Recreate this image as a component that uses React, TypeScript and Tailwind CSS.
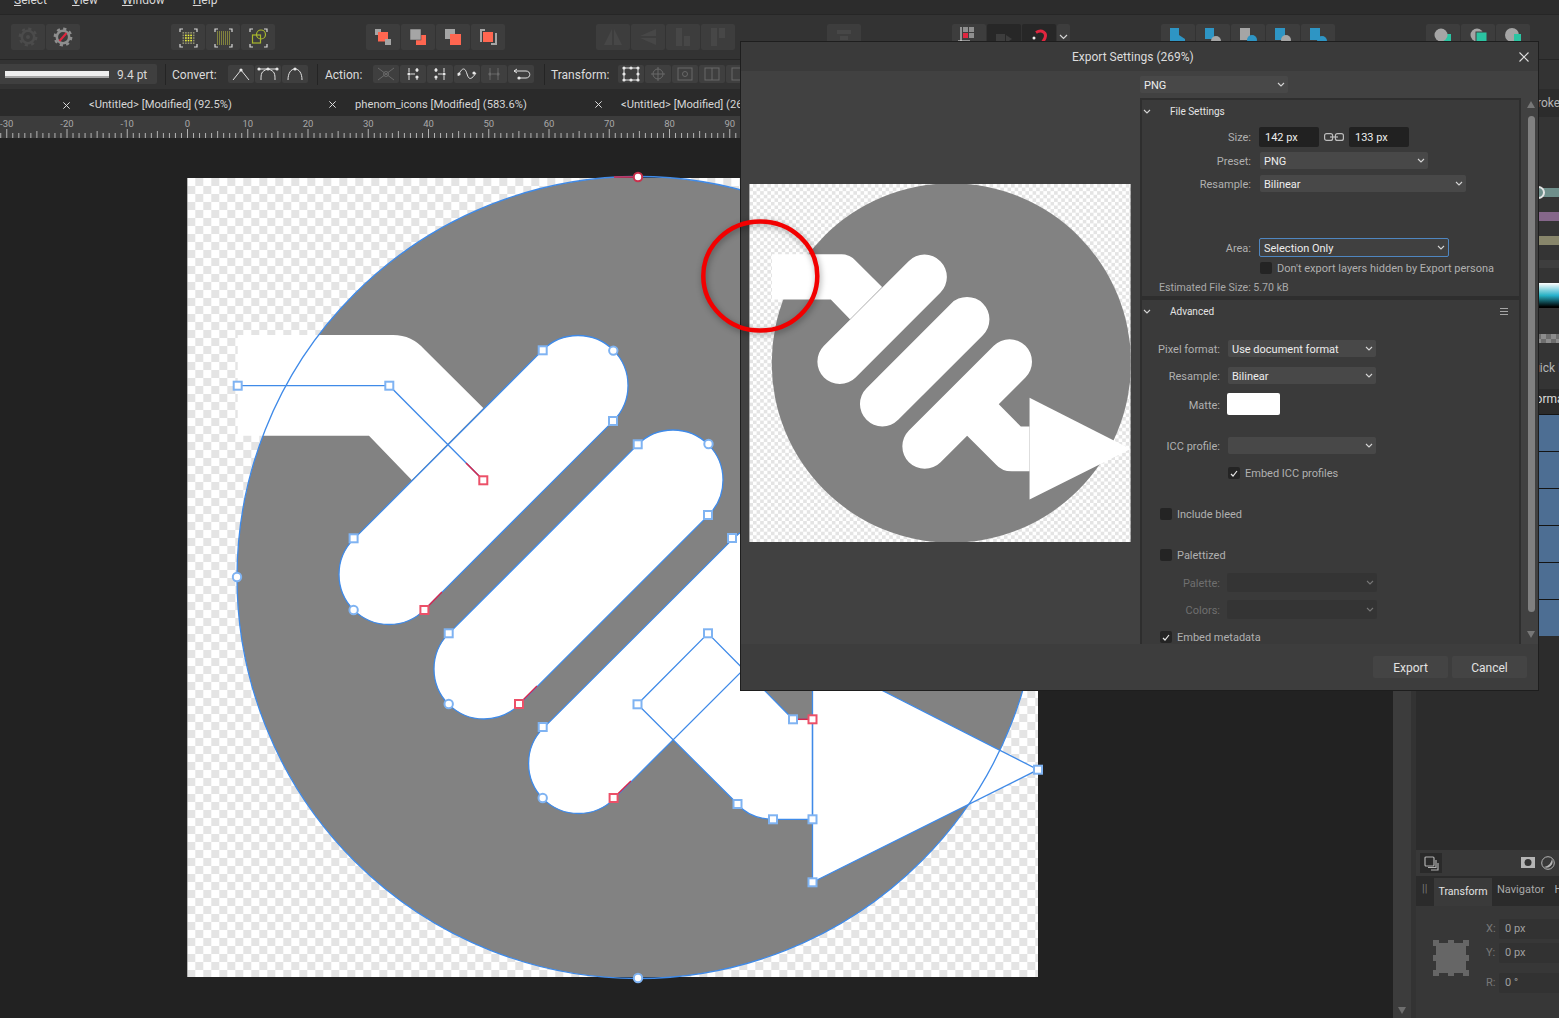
import type { ReactNode } from "react";

const capsule = (ax: number, ay: number, bx: number, by: number) => {
  const d = 35.36;
  return `M${ax - d} ${ay - d}A50 50 0 0 1 ${ax + d} ${ay + d}L${bx + d} ${by + d}A50 50 0 0 1 ${bx - d} ${by - d}Z`;
};

const CAPSULES = [capsule(578, 385.5, 389, 574.5), capsule(673, 480, 484, 669), capsule(768, 574.5, 578.6, 763.5)];
const STEM_IN = "M237.7 335H393Q412 335 425 350L483.3 408L411.7 480L369 435.7H237.7Z";
const STEM_OUT = "M637.5 704.3L708 633.3L793 719.3H812.5V819.3H773Q750 819 737.5 804Z";
const ARROW = "M812.5 655L1038 769.7L812.5 882.3Z";

// the icon itself, in artboard coordinates; shared by canvas and export preview
function Artwork({ id }: { id: string }) {
  return (
    <>
      <defs>
        <pattern id={id} x="187.3" y="178" width="16" height="16" patternUnits="userSpaceOnUse">
          <rect width="16" height="16" fill="#ffffff" />
          <rect x="8" width="8" height="8" fill="#e4e4e4" />
          <rect y="8" width="8" height="8" fill="#e4e4e4" />
        </pattern>
        <clipPath id={`${id}-clip`}>
          <rect x="187.3" y="178" width="850.7" height="799" />
        </clipPath>
      </defs>
      <rect x="187.3" y="178" width="850.7" height="799" fill={`url(#${id})`} />
      <g clipPath={`url(#${id}-clip)`} fill="#ffffff">
        <circle cx="638" cy="577.5" r="401" fill="#828282" />
        <path d={STEM_IN} />
        {CAPSULES.map((d) => (
          <path key={d} d={d} />
        ))}
        <path d={STEM_OUT} />
        <path d={ARROW} />
      </g>
    </>
  );
}

const SQUARES = [
  [237.7, 385.7], [389.3, 385.7], [542.7, 350.3], [613, 421], [353.6, 538.3], [637.7, 444.3], [708, 515],
  [448.7, 633.3], [732, 538], [542.7, 727], [637.5, 704.3], [708, 633.3], [737.5, 804], [773, 819.3],
  [812.5, 819.3], [812.5, 882.3], [1038, 769.7], [793, 719.3],
];
const CIRCLES = [[237, 577], [638, 978], [613.3, 350.6], [353.6, 610], [708.5, 444], [448.7, 704], [542.7, 798]];
const RED_SQUARES = [[483.3, 480.3], [424.4, 610], [519, 704], [613.6, 798], [812.5, 719.3]];
const RED_HANDLES = [
  "M483.3 480.3L466 463", "M424.4 610L442 592", "M519 704L537 686", "M613.6 798L631 781",
  "M638 177H614", "M812.5 719.3H793",
];

function CanvasDrawing() {
  return (
    <svg width="1393" height="880" viewBox="0 138 1393 880" className="block">
      <Artwork id="board" />
      <g fill="none" stroke="#3f8ae8" strokeWidth="1.3">
        <circle cx="638" cy="577.5" r="401" />
        {CAPSULES.map((d) => (
          <path key={d} d={d} />
        ))}
        <path d="M237.7 385.7H389.3L483.3 480.3" />
        <path d={STEM_OUT} />
        <path d={ARROW} />
      </g>
      <g fill="none" stroke="#d8274a" strokeWidth="1.5">
        {RED_HANDLES.map((d) => (
          <path key={d} d={d} />
        ))}
      </g>
      <g fill="#ffffff" stroke="#7fb3f2" strokeWidth="2">
        {SQUARES.map(([x, y]) => (
          <rect key={`${x}-${y}`} x={x - 4} y={y - 4} width="8" height="8" />
        ))}
        {CIRCLES.map(([x, y]) => (
          <circle key={`${x}-${y}`} cx={x} cy={y} r="4.2" />
        ))}
      </g>
      <g fill="#ffffff" stroke="#ec5068" strokeWidth="2">
        {RED_SQUARES.map(([x, y]) => (
          <rect key={`${x}-${y}`} x={x - 4} y={y - 4} width="8" height="8" />
        ))}
        <circle cx="638" cy="177" r="4.2" stroke="#c9304c" />
      </g>
    </svg>
  );
}

function Gear({ dim }: { dim?: boolean }) {
  const c = dim ? "#4b4b4b" : "#8e8e8e";
  return (
    <svg width="34" height="26" viewBox="0 0 34 26">
      <circle cx="17" cy="13" r="6.2" fill="none" stroke={c} strokeWidth="2.6" />
      <circle cx="17" cy="13" r="8.2" fill="none" stroke={c} strokeWidth="2.4" strokeDasharray="3.2 3.23" />
      {dim ? <circle cx="17" cy="13" r="2" fill={c} /> : <path d="M13.5 17L20.5 9" stroke="#e0263f" strokeWidth="2" />}
    </svg>
  );
}

function Brackets() {
  return (
    <path
      d="M9 8V5H12M23 5H26V8M9 20V23H12M23 23H26V20"
      fill="none"
      stroke="#d8d8d8"
      strokeWidth="1.2"
    />
  );
}

function DotGrid({ n, gap, bright }: { n: number; gap: number; bright: boolean }) {
  const dots = [];
  const start = 17.5 - ((n - 1) * gap) / 2;
  const size = bright ? 1.6 : 1;
  for (let r = 0; r < n; r++) {
    for (let c = 0; c < n; c++) {
      const inner = bright && r > 0 && r < n - 1 && c > 0 && c < n - 1;
      dots.push(
        <rect
          key={`${r}-${c}`}
          x={start + c * gap - size / 2}
          y={14 + (r - (n - 1) / 2) * gap - size / 2}
          width={size}
          height={size}
          fill={inner ? "#f2f53c" : bright ? "#8f8f70" : "#c4c740"}
        />,
      );
    }
  }
  return (
    <svg width="34" height="26" viewBox="0 0 34 26">
      <Brackets />
      {dots}
    </svg>
  );
}

const G = "#a5a5a5";
const C = "#ff6650";
const B = "#2e95c4";
const T = "#2bc4a2";

function Big({ children }: { children: ReactNode }) {
  return (
    <svg width="34" height="26" viewBox="0 0 34 26">
      {children}
    </svg>
  );
}

function Btn({ children, wide = true, dark }: { children?: ReactNode; wide?: boolean; dark?: boolean }) {
  return (
    <div
      className={`flex h-[26px] shrink-0 items-center justify-center rounded-[2px] ${wide ? "w-[34px]" : "w-[13px]"} ${dark ? "bg-[#272727]" : "bg-[#3d3d3d]"}`}
    >
      {children}
    </div>
  );
}

function Small({ children, dim }: { children: ReactNode; dim?: boolean }) {
  return (
    <div className="flex h-[18px] w-[26px] shrink-0 items-center justify-center rounded-[2px] bg-[#3f3f3f]">
      <svg width="26" height="18" viewBox="0 0 26 18" fill="none" stroke="#e2e2e2" strokeWidth="1" className={dim ? "opacity-25" : ""}>
        {children}
      </svg>
    </div>
  );
}

const Dot = ({ x, y }: { x: number; y: number }) => <circle cx={x} cy={y} r="1.6" fill="#e8e8e8" stroke="none" />;

function TopToolbar() {
  return (
    <div className="flex h-[44px] shrink-0 items-center bg-[#333333] pl-[11px]">
      <div className="flex gap-px">
        <Btn><Gear dim /></Btn>
        <Btn><Gear /></Btn>
      </div>
      <div className="ml-[91px] flex gap-px">
        <Btn><DotGrid n={5} gap={2.6} bright /></Btn>
        <Btn><DotGrid n={7} gap={2} bright={false} /></Btn>
        <Btn>
          <Big>
            <Brackets />
            <rect x="11.5" y="11" width="8" height="8" fill="none" stroke="#a9b82c" strokeWidth="1.2" />
            <circle cx="20" cy="10.5" r="4.5" fill="none" stroke="#a9b82c" strokeWidth="1.2" />
          </Big>
        </Btn>
      </div>
      <div className="ml-[91px] flex gap-px">
        <Btn>
          <Big>
            <rect x="9" y="5" width="6" height="6" fill={G} />
            <rect x="12" y="8" width="10" height="9.5" fill={C} />
            <rect x="19" y="15" width="6" height="6" fill={G} />
          </Big>
        </Btn>
        <Btn>
          <Big>
            <rect x="15" y="11" width="10" height="10" fill={C} />
            <rect x="9" y="5" width="11" height="11" fill={G} stroke="#3f3f3f" strokeWidth="0.5" />
          </Big>
        </Btn>
        <Btn>
          <Big>
            <rect x="9" y="5" width="10" height="10" fill={G} />
            <rect x="14" y="10" width="11" height="11" fill={C} />
          </Big>
        </Btn>
        <Btn>
          <Big>
            <path d="M14 6H10V18M20 20H25V9" fill="none" stroke={G} strokeWidth="2" />
            <rect x="12" y="8" width="10" height="10" fill={C} />
          </Big>
        </Btn>
      </div>
      <div className="ml-[91px] flex gap-px">
        <Btn><Big><path d="M16 5V21H8ZM18 5L26 21H18Z" fill="#474747" /></Big></Btn>
        <Btn><Big><path d="M9 12L25 5V12ZM9 14H25V21Z" fill="#474747" /></Big></Btn>
        <Btn><Big><path d="M10 4H16V22H10ZM18 12H24V22H18Z" fill="#474747" /></Big></Btn>
        <Btn><Big><path d="M10 4H16V22H10ZM18 4H24V14H18Z" fill="#474747" /></Big></Btn>
      </div>
      <div className="ml-[92px] flex">
        <Btn><Big><path d="M10 6H24V10H10ZM13 12H21V16H13Z" fill="#474747" /></Big></Btn>
      </div>
      <div className="ml-[91px] flex gap-px">
        <Btn>
          <Big>
            <path d="M9 3V17M6 17H18" stroke="#e8e8e8" strokeWidth="1" />
            <rect x="11" y="3" width="5" height="5" fill="#8f8f8f" />
            <rect x="17" y="3" width="5" height="5" fill="#8f8f8f" />
            <rect x="11" y="9" width="5" height="5" fill="#e0263f" />
            <rect x="17" y="9" width="5" height="5" fill="#8f8f8f" />
          </Big>
        </Btn>
        <Btn dark>
          <Big><path d="M9 10H18V22H9ZM19 11L25 15L19 19Z" fill="#3d3d3d" /></Big>
        </Btn>
        <Btn dark>
          <Big>
            <path d="M14 8.5C20 5 25 9 23 14C22 17 20 19 18 21" fill="none" stroke="#e0263f" strokeWidth="3" />
            <circle cx="12" cy="14" r="1.5" fill="#eeeeee" />
          </Big>
        </Btn>
        <Btn wide={false}>
          <svg width="9" height="6" viewBox="0 0 9 6"><path d="M1 1L4.5 4.5L8 1" fill="none" stroke="#d5d5d5" strokeWidth="1.2" /></svg>
        </Btn>
      </div>
      <div className="ml-[91px] flex gap-px">
        <Btn><Big><path d="M9 4H18V11L24 15V22H9Z" fill={B} /></Big></Btn>
        <Btn><Big><path d="M9 4H18V15H9Z" fill={B} /><circle cx="20" cy="17" r="5" fill={G} /></Big></Btn>
        <Btn><Big><path d="M9 4H19V16H9Z" fill={G} /><circle cx="21" cy="16" r="5" fill={B} /></Big></Btn>
        <Btn><Big><path d="M9 4H19V16H9Z" fill={B} /><circle cx="20" cy="16" r="5" fill={G} /></Big></Btn>
        <Btn><Big><path d="M9 4H19V16H9Z" fill={B} /><circle cx="21" cy="17" r="5" fill={B} /></Big></Btn>
      </div>
      <div className="ml-[91px] flex gap-px">
        <Btn><Big><rect x="17" y="10" width="8" height="11" fill={T} /><circle cx="15" cy="11" r="6.5" fill={G} /></Big></Btn>
        <Btn><Big><circle cx="16" cy="11" r="6.5" fill={G} /><rect x="15" y="8" width="11" height="11" fill={T} stroke="#3f3f3f" strokeWidth="1" /></Big></Btn>
        <Btn><Big><circle cx="16" cy="11" r="7" fill={G} /><rect x="18" y="10" width="7" height="8" fill={T} /></Big></Btn>
      </div>
    </div>
  );
}

function VSep() {
  return <div className="h-[21px] w-px shrink-0 bg-[#242424]" />;
}

function ContextToolbar() {
  return (
    <div className="flex h-[30px] shrink-0 items-center border-t border-[#262626] bg-[#333333] pb-px text-[12px] text-[#dcdcdc]">
      <div className="flex h-[20px] w-[157px] shrink-0 items-center rounded-r-[2px] bg-[#3f3f3f] pl-[5px]">
        <div className="h-[7px] w-[104px] border-b-2 border-[#a5a5a5] bg-[#eeeeee]" />
        <span className="ml-[8px] translate-y-px text-[12px] text-[#d8d8d8]">9.4 pt</span>
      </div>
      <div className="ml-[8px]"><VSep /></div>
      <span className="ml-[6px] w-[56px] shrink-0 translate-y-px">Convert:</span>
      <div className="flex gap-px">
        <Small><path d="M5 15L13 5L21 15" /><Dot x={13} y={5} /></Small>
        <Small>
          <path d="M6 15C6 9 6 6 13 4C20 6 20 9 20 15M3 4H23" />
          <Dot x={13} y={4} /><Dot x={4} y={4} /><Dot x={22} y={4} />
        </Small>
        <Small><path d="M6 15C6 8 9 4 13 4C17 4 20 8 20 15" /><Dot x={13} y={4} /></Small>
      </div>
      <div className="ml-[9px]"><VSep /></div>
      <span className="ml-[7px] w-[48px] shrink-0 translate-y-px">Action:</span>
      <div className="flex gap-px">
        <Small dim><path d="M5 3L21 15M21 3L5 15" /><circle cx="13" cy="9" r="2.5" /></Small>
        <Small><path d="M9 3V7M9 11V15M17 3V7M17 11V15M11 9H15" /><Dot x={9} y={9} /><Dot x={17} y={5} /><Dot x={17} y={12} /></Small>
        <Small><path d="M9 3V7M9 11V15M17 3V7M17 11V15M11 9H15" /><Dot x={17} y={9} /><Dot x={9} y={5} /><Dot x={9} y={12} /></Small>
        <Small><path d="M4 11C8 2 11 2 13 9C15 16 18 14 22 8" /><Dot x={5} y={9} /><Dot x={20} y={8} /></Small>
        <Small dim><path d="M9 3V15M17 3V15M11 9H15" /><Dot x={9} y={9} /><Dot x={17} y={9} /></Small>
        <Small><path d="M6 6H18C23 6 23 13 18 13H12" /><path d="M6 6L9 4M6 6L9 8" /><Dot x={11} y={13} /></Small>
      </div>
      <div className="ml-[10px]"><VSep /></div>
      <span className="ml-[6px] w-[67px] shrink-0 translate-y-px">Transform:</span>
      <div className="flex gap-px">
        <Small><rect x="6" y="3" width="14" height="12" /><Dot x={6} y={3} /><Dot x={20} y={3} /><Dot x={6} y={15} /><Dot x={20} y={15} /><Dot x={13} y={3} /><Dot x={13} y={15} /><Dot x={6} y={9} /><Dot x={20} y={9} /></Small>
        <Small dim><circle cx="13" cy="9" r="5" /><path d="M13 2V16M6 9H20" /></Small>
        <Small dim><rect x="6" y="3" width="14" height="12" /><circle cx="13" cy="9" r="2.5" /></Small>
        <Small dim><rect x="6" y="3" width="14" height="12" /><path d="M13 3V15" /></Small>
        <Small dim><rect x="6" y="3" width="14" height="12" /></Small>
      </div>
    </div>
  );
}

function Cross({ size }: { size: number }) {
  return (
    <svg width={size} height={size} viewBox="0 0 10 10" className="shrink-0">
      <path d="M.5 .5L9.5 9.5M9.5 .5L.5 9.5" stroke="#dfdfdf" strokeWidth={size > 8 ? 1.1 : 1.4} />
    </svg>
  );
}

function Tab({ title }: { title: string }) {
  return (
    <div className="flex w-[266px] shrink-0 items-center justify-between pr-[19px]">
      <span className="whitespace-nowrap">{title}</span>
      <Cross size={7} />
    </div>
  );
}

function TabBar() {
  return (
    <div className="flex h-[27px] shrink-0 items-center overflow-hidden bg-[#2a2a2a] pt-[5px] text-[11.2px] text-[#d6d6d6]">
      <div className="flex w-[89px] shrink-0 justify-end pr-[19px]"><Cross size={7} /></div>
      <Tab title="<Untitled> [Modified] (92.5%)" />
      <Tab title="phenom_icons [Modified] (583.6%)" />
      <Tab title="<Untitled> [Modified] (269%)" />
    </div>
  );
}

function Ruler() {
  const zero = 187.5;
  const unit = 6.025;
  const ticks = [];
  for (let i = -32; i < 200; i++) {
    const x = zero + i * unit;
    ticks.push(<path key={i} d={`M${x} ${i % 10 === 0 ? 13 : i % 5 === 0 ? 15 : 17}V22`} stroke="#d2d2d2" strokeWidth="0.8" />);
  }
  const labels = [];
  for (let v = -30; v <= 190; v += 10) {
    labels.push(
      <text key={v} x={zero + v * unit} y="11" fontSize="9.5" textAnchor="middle" fill="#a8a8a8">
        {v}
      </text>,
    );
  }
  return (
    <svg width="1393" height="22" className="block shrink-0 bg-[#3c3c3c]">
      {labels}
      {ticks}
    </svg>
  );
}

function RightPanel() {
  return (
    <div className="flex w-[143px] shrink-0 flex-col bg-[#343434]">
      <div className="flex h-[28px] shrink-0 items-center bg-[#2c2c2c] pl-[110px] text-[12px] text-[#b5b5b5]">Stroke</div>
      <div className="relative ml-[60px] mt-[71px] h-[9px] shrink-0 bg-[#6f8f8b]">
        <div className="absolute left-[56px] top-[-2px] size-[13px] rounded-full border-2 border-[#e5e5e5] bg-[#6f8f8b]" />
      </div>
      <div className="ml-[60px] mt-[15px] h-[9px] shrink-0 bg-[#85678a]" />
      <div className="ml-[60px] mt-[15px] h-[9px] shrink-0 bg-[#88866b]" />
      <div className="ml-[60px] mt-[15px] h-[8px] shrink-0 bg-[#3e3e3e]" />
      <div className="ml-[60px] mt-[15px] h-[25px] shrink-0 bg-[linear-gradient(to_bottom,#ffffff,transparent_50%,#000000_95%),linear-gradient(to_right,#2fb58a,#25b0d0)]" />
      <div className="ml-[60px] mt-[26px] h-[9px] shrink-0 bg-[repeating-conic-gradient(#8d8d8d_0_25%,#6e6e6e_0_50%)] bg-[length:10px_10px]" />
      <div className="mt-[17px] flex h-[16px] shrink-0 items-center whitespace-nowrap pl-[109px] text-[12px] text-[#b5b5b5]">
        Quick <span className="ml-[3px] text-[#3f9fd8]">I</span>
      </div>
      <div className="mt-[13px] h-[25px] shrink-0 whitespace-nowrap bg-[#2b2b2b] pl-[111px] pt-px text-[12px] text-[#dcdcdc]">Normal</div>
      <div className="flex shrink-0 flex-col">
        {[0, 1, 2, 3, 4, 5].map((r) => (
          <div key={r} className="h-[37px] border-t border-[#141414] bg-[#4d6e93]" />
        ))}
      </div>
      <div className="flex-1 bg-[#2c2c2c]" />
      <div className="flex h-[26px] shrink-0 items-center justify-between bg-[#383838] pl-[4px] pr-[4px]">
        <div className="flex h-[20px] w-[22px] items-center justify-center bg-[#2a2a2a]">
          <svg width="15" height="15" viewBox="0 0 15 15" fill="none" stroke="#b0b0b0" strokeWidth="1.2">
            <rect x="1" y="1" width="9" height="9" rx="1" />
            <path d="M12 4V11.5H4M14 7V14H7" />
          </svg>
        </div>
        <div className="flex items-center gap-[6px]">
          <svg width="14" height="14" viewBox="0 0 14 14"><rect width="14" height="11" y="1" fill="#b5b5b5" /><circle cx="7" cy="6.5" r="3.5" fill="#333333" /></svg>
          <svg width="14" height="14" viewBox="0 0 14 14"><circle cx="7" cy="7" r="6.3" fill="none" stroke="#b5b5b5" /><path d="M3 11C8 10 10 7 11 3A6 6 0 0 1 3 11Z" fill="#b5b5b5" /></svg>
        </div>
      </div>
      <div className="flex h-[30px] shrink-0 items-end overflow-hidden bg-[#2b2b2b] text-[11px] text-[#a8a8a8]">
        <span className="mb-[9px] w-[18px] shrink-0 pl-[6px] text-[#777777]">||</span>
        <span className="flex h-[28px] w-[58px] shrink-0 items-center justify-center bg-[#3a3a3a] text-[10.6px] text-[#e3e3e3]">Transform</span>
        <span className="mb-[8px] ml-[5px] whitespace-nowrap">Navigator</span>
        <span className="mb-[8px] ml-[10px] whitespace-nowrap">History</span>
      </div>
      <div className="flex h-[112px] shrink-0 gap-[17px] bg-[#373737] pl-[17px] pt-[13px] text-[11px] text-[#777777]">
        <svg width="36" height="36" viewBox="0 0 36 36" className="mt-[21px] shrink-0">
          <rect x="3" y="3" width="30" height="30" fill="#666666" />
          {[0, 15, 30].map((x) =>
            [0, 15, 30].map((y) => <rect key={`${x}-${y}`} x={x} y={y} width="6" height="6" fill="#666666" />),
          )}
        </svg>
        <div className="flex flex-1 flex-col">
          {[
            ["X:", "0 px", "mt-0"],
            ["Y:", "0 px", "mt-[4px]"],
            ["R:", "0 °", "mt-[10px]"],
          ].map(([k, v, m]) => (
            <div key={k} className={`flex h-[20px] items-center ${m}`}>
              <span className="w-[13px] shrink-0">{k}</span>
              <span className="flex h-[20px] flex-1 items-center rounded-l-[2px] bg-[#323232] pl-[6px] text-[#a0a0a0]">{v}</span>
            </div>
          ))}
        </div>
      </div>
    </div>
  );
}

function Chevron({ color = "#d5d5d5" }: { color?: string }) {
  return (
    <svg width="8" height="5" viewBox="0 0 8 5" className="shrink-0">
      <path d="M1 1L4 4L7 1" fill="none" stroke={color} strokeWidth="1.1" />
    </svg>
  );
}

function Select({ value, w, h = "h-[17px]", style = "bg-[#484848]", dim }: { value?: string; w: string; h?: string; style?: string; dim?: boolean }) {
  return (
    <div className={`flex shrink-0 items-center justify-between rounded-[2px] pl-[4px] pr-[3px] text-[#ededed] ${w} ${h} ${style}`}>
      <span className="translate-y-[2px]">{value}</span>
      <Chevron color={dim ? "#777777" : "#d5d5d5"} />
    </div>
  );
}

function Row({ label, m, col, dim, children }: { label: string; m: string; col: string; dim?: boolean; children: ReactNode }) {
  return (
    <div className={`flex items-center ${m}`}>
      <span className={`shrink-0 translate-y-[2px] text-right ${col} ${dim ? "text-[#6f6f6f]" : "text-[#b0b0b0]"}`}>{label}</span>
      {children}
    </div>
  );
}

function Check({ label, checked, m }: { label: string; checked?: boolean; m: string }) {
  return (
    <div className={`flex h-[12px] items-center ${m}`}>
      <div className="flex size-[12px] shrink-0 items-center justify-center rounded-[2px] bg-[#242424]">
        {checked && (
          <svg width="8" height="7" viewBox="0 0 8 7"><path d="M1 4L3 6L7 1" fill="none" stroke="#e8e8e8" strokeWidth="1.2" /></svg>
        )}
      </div>
      <span className="ml-[5px] translate-y-px whitespace-nowrap text-[#b0b0b0]">{label}</span>
    </div>
  );
}

function SectionHeader({ title, menu }: { title: string; menu?: boolean }) {
  return (
    <div className="flex h-[22px] shrink-0 items-center pl-px pr-[11px] text-[10px] text-[#e4e4e4]">
      <Chevron />
      <span className="ml-[19px] flex-1">{title}</span>
      {menu && (
        <svg width="8" height="7" viewBox="0 0 8 7"><path d="M0 .5H8M0 3.5H8M0 6.5H8" stroke="#a5a5a5" /></svg>
      )}
    </div>
  );
}

function Field({ value }: { value: string }) {
  return <div className="flex h-[20px] w-[60px] shrink-0 items-center rounded-[2px] bg-[#212121] pl-[6px] text-[#ededed]"><span className="translate-y-px">{value}</span></div>;
}

function ExportDialog() {
  return (
    <div className="absolute left-[740px] top-[41px] flex h-[650px] w-[799px] flex-col border border-[#1e1e1e] bg-[#414141] text-[11px]">
      <div className="flex h-[29px] shrink-0 items-center justify-between bg-[#3a3a3a] pl-[331px] pr-[9px] text-[12px] text-[#dddddd]">
        <span>Export Settings (269%)</span>
        <Cross size={10} />
      </div>
      <div className="flex min-h-0 flex-1">
        <div className="w-[399px] shrink-0 pl-[8px] pt-[113px]">
          <svg width="382" height="358" viewBox="187.3 178 850.7 799" className="block blur-[0.7px]">
            <Artwork id="preview" />
          </svg>
        </div>
        <div className="flex min-w-0 flex-1 flex-col">
          <div className="mt-[5px] flex h-[17px] w-[148px] shrink-0 items-center justify-between rounded-[2px] bg-[#484848] pl-[4px] pr-[3px] text-[#ededed]">
            <span className="translate-y-[2px]">PNG</span>
            <Chevron />
          </div>
          <div className="flex min-h-0 flex-1">
            <div className="mt-[5px] flex w-[381px] shrink-0 flex-col gap-[4px] overflow-hidden border-x-2 border-t-2 border-[#2e2e2e] bg-[#2e2e2e]">
              <div className="flex h-[196px] shrink-0 flex-col bg-[#3a3a3a]">
                <SectionHeader title="File Settings" />
                <Row label="Size:" m="mt-[5px]" col="-mt-[2px] w-[109px]">
                  <div className="ml-[8px] flex items-center">
                    <Field value="142 px" />
                    <svg width="20" height="8" viewBox="0 0 20 8" className="mx-[5px]" fill="none" stroke="#bdbdbd" strokeWidth="1.2">
                      <rect x=".6" y=".6" width="8" height="6.8" rx="2" />
                      <rect x="11.4" y=".6" width="8" height="6.8" rx="2" />
                      <path d="M6 4H14" />
                    </svg>
                    <Field value="133 px" />
                  </div>
                </Row>
                <Row label="Preset:" m="mt-[5px]" col="w-[109px]">
                  <div className="ml-[9px]"><Select value="PNG" w="w-[168px]" /></div>
                </Row>
                <Row label="Resample:" m="mt-[6px]" col="w-[109px]">
                  <div className="ml-[9px]"><Select value="Bilinear" w="w-[206px]" /></div>
                </Row>
                <Row label="Area:" m="mt-[46px]" col="w-[109px]">
                  <div className="ml-[8px]">
                    <Select value="Selection Only" w="w-[190px]" h="h-[19px]" style="border border-[#4f86c0] bg-[#404040]" />
                  </div>
                </Row>
                <div className="ml-[118px] mt-[5px]">
                  <Check label="Don't export layers hidden by Export persona" m="mt-0" />
                </div>
                <div className="ml-[17px] mt-[5px] translate-y-px text-[10.6px] text-[#a8a8a8]">Estimated File Size: 5.70 kB</div>
              </div>
              <div className="flex min-h-0 flex-1 flex-col overflow-hidden bg-[#3a3a3a]">
                <SectionHeader title="Advanced" menu />
                <Row label="Pixel format:" m="mt-[18px]" col="w-[78px]">
                  <div className="ml-[8px]"><Select value="Use document format" w="w-[148px]" /></div>
                </Row>
                <Row label="Resample:" m="mt-[10px]" col="w-[78px]">
                  <div className="ml-[8px]"><Select value="Bilinear" w="w-[148px]" /></div>
                </Row>
                <Row label="Matte:" m="mt-[9px]" col="w-[78px]">
                  <div className="ml-[7px] h-[22px] w-[53px] rounded-[2px] bg-white" />
                </Row>
                <Row label="ICC profile:" m="mt-[22px]" col="w-[78px]">
                  <div className="ml-[8px]"><Select w="w-[148px]" /></div>
                </Row>
                <div className="ml-[86px]">
                  <Check label="Embed ICC profiles" checked m="mt-[13px]" />
                </div>
                <div className="ml-[18px]">
                  <Check label="Include bleed" m="mt-[29px]" />
                  <Check label="Palettized" m="mt-[29px]" />
                </div>
                <Row label="Palette:" m="mt-[12px]" col="w-[78px]" dim>
                  <div className="ml-[7px]"><Select w="w-[150px]" h="h-[19px]" style="bg-[#343434]" dim /></div>
                </Row>
                <Row label="Colors:" m="mt-[8px]" col="w-[78px]" dim>
                  <div className="ml-[7px]"><Select w="w-[150px]" h="h-[19px]" style="bg-[#343434]" dim /></div>
                </Row>
                <div className="ml-[18px]">
                  <Check label="Embed metadata" checked m="mt-[12px]" />
                </div>
              </div>
            </div>
            <div className="ml-[6px] flex w-[8px] shrink-0 flex-col items-center pt-[8px]">
              <div className="h-0 w-0 border-x-[4px] border-b-[7px] border-x-transparent border-b-[#777777]" />
              <div className="mt-[8px] h-[496px] w-[7px] rounded-full bg-[#808080]" />
              <div className="mt-[19px] h-0 w-0 border-x-[4px] border-t-[7px] border-x-transparent border-t-[#777777]" />
            </div>
          </div>
        </div>
      </div>
      <div className="flex h-[46px] shrink-0 items-center justify-end gap-[4px] bg-[#3d3d3d] pr-[11px] text-[12px] text-[#e2e2e2]">
        <div className="flex h-[22px] w-[75px] items-center justify-center rounded-[2px] bg-[#444444]"><span className="translate-y-px">Export</span></div>
        <div className="flex h-[22px] w-[75px] items-center justify-center rounded-[2px] bg-[#444444]"><span className="translate-y-px">Cancel</span></div>
      </div>
    </div>
  );
}

export default function App() {
  return (
    <div className="relative flex h-[1018px] w-[1559px] flex-col overflow-hidden bg-[#222222] font-['Roboto',sans-serif] text-[12px]">
      <div className="h-[15px] shrink-0 overflow-hidden border-b border-[#262626] bg-[#2c2c2c] text-[12px] text-[#d8d8d8]">
        <div className="-mt-[9px] flex pl-[14px]">
          <span><u>S</u>elect</span>
          <span className="ml-[25px]"><u>V</u>iew</span>
          <span className="ml-[24px]"><u>W</u>indow</span>
          <span className="ml-[28px]"><u>H</u>elp</span>
        </div>
      </div>
      <TopToolbar />
      <ContextToolbar />
      <div className="flex min-h-0 flex-1">
        <div className="flex w-[1393px] shrink-0 flex-col overflow-hidden">
          <TabBar />
          <Ruler />
          <div className="min-h-0 flex-1 bg-[#222222]">
            <CanvasDrawing />
          </div>
        </div>
        <div className="flex w-[18px] shrink-0 flex-col items-center justify-end bg-[#3c3c3c] pb-[4px]">
          <div className="h-0 w-0 border-x-[4px] border-t-[7px] border-x-transparent border-t-[#6f6f6f]" />
        </div>
        <div className="w-[5px] shrink-0 bg-[#333333]" />
        <RightPanel />
      </div>
      <ExportDialog />
      <svg width="130" height="125" viewBox="696 214 130 125" className="absolute left-[696px] top-[214px] drop-shadow-[1px_2px_3px_rgba(0,0,0,0.35)]">
        <ellipse cx="760.3" cy="276" rx="57" ry="54.5" fill="none" stroke="#f20000" strokeWidth="4.5" />
      </svg>
    </div>
  );
}
